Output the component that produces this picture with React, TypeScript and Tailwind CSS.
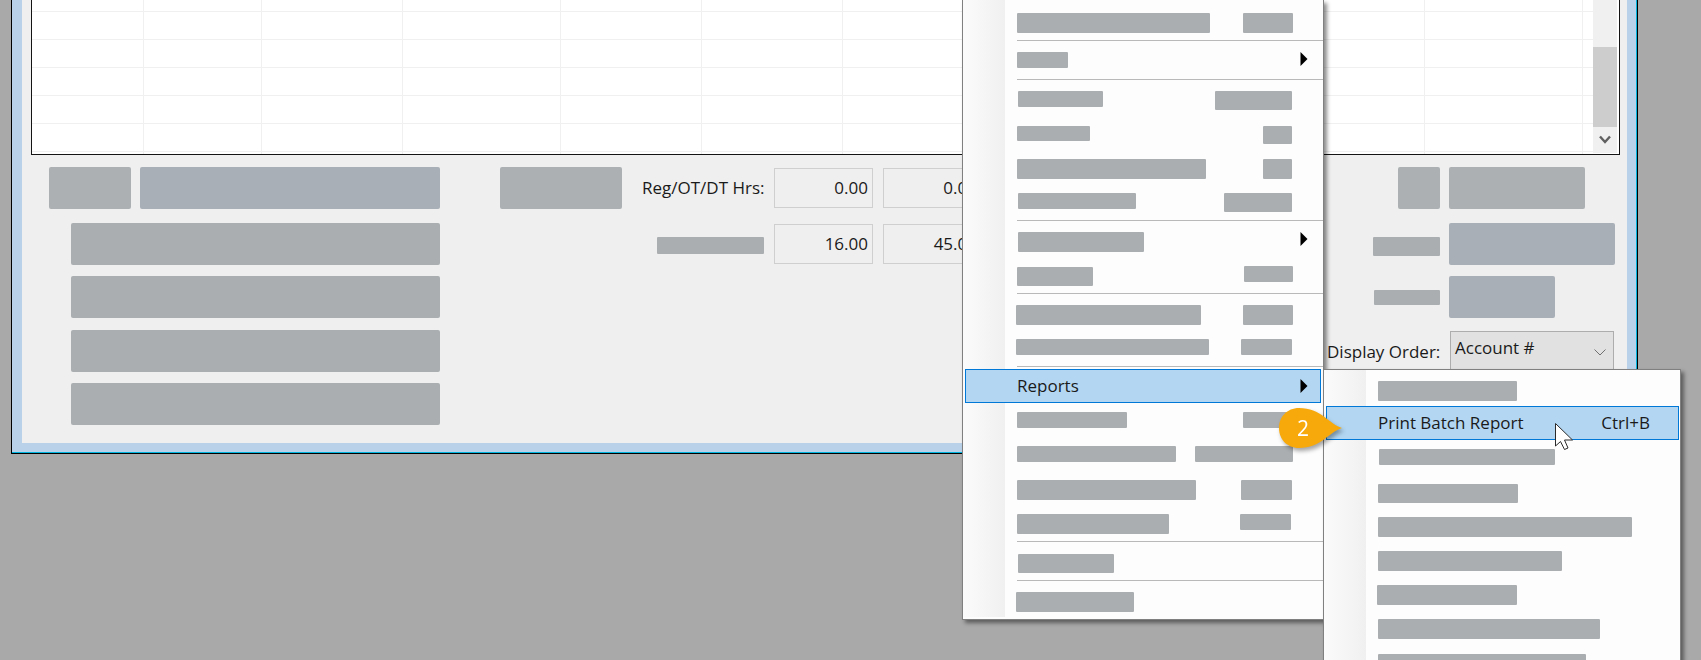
import React from "react";

function Bar({ className = "" }: { className?: string }) {
  return <div className={"shrink-0 rounded-[1px] bg-[#abaeb0] " + className} />;
}

function Block({ className = "" }: { className?: string }) {
  return <div className={"h-[42px] shrink-0 rounded-[2px] " + className} />;
}

function Sep() {
  return <div className="ml-[12px] h-px shrink-0 bg-[#b9b9b9]" />;
}

function Arrow() {
  return (
    <svg className="ml-auto mr-[15px] mt-[11px] shrink-0" width="8" height="14" viewBox="0 0 8 14">
      <path d="M0.5 0 L7.5 7 L0.5 14 Z" fill="#000" />
    </svg>
  );
}

const rowHeights = ["h-[12px]", "h-[28px]", "h-[28px]", "h-[28px]", "h-[28px]", "h-[28px]", "h-[2px]"];
const cellWidths = ["w-[112px]", "w-[118px]", "w-[141px]", "w-[158px]", "w-[141px]", "w-[141px]", "w-[582px]", "w-[158px]", "flex-1"];

function TableGrid() {
  return (
    <div className="flex min-w-0 flex-1 flex-col">
      {rowHeights.map((h, r) => (
        <div key={r} className={"flex shrink-0 " + h + (r < 6 ? " border-b border-[#f0f0f0]" : "")}>
          {cellWidths.map((w, c) => (
            <div key={c} className={"shrink-0 " + w + (c < 8 ? " border-r border-[#f0f0f0]" : "")} />
          ))}
        </div>
      ))}
    </div>
  );
}

function Scrollbar() {
  return (
    <div className="mb-[1px] flex w-[24px] shrink-0 flex-col bg-[#f0f0f0]">
      <div className="h-[47px] shrink-0" />
      <div className="h-[80px] shrink-0 bg-[#cdcdcd]" />
      <div className="flex flex-1 items-start justify-center pt-[8px]">
        <svg width="12" height="10" viewBox="0 0 12 10">
          <path d="M1 1.5 L6 7 L11 1.5" fill="none" stroke="#606060" strokeWidth="2.4" />
        </svg>
      </div>
    </div>
  );
}

function NumBox({ value }: { value: string }) {
  return (
    <div className="flex h-[40px] w-[99px] shrink-0 items-center justify-end border border-[#cfcfcf] pr-[4px] pb-[1px] text-[17px] text-[#1a1a1a]">
      {value}
    </div>
  );
}

function LowerPanel() {
  return (
    <div className="flex text-[17px] text-[#1a1a1a]">
      <div className="ml-[27px] w-[391px] shrink-0 pt-[12px]">
        <div className="flex gap-[9px]">
          <Block className="w-[82px] bg-[#adb0b2]" />
          <Block className="w-[300px] bg-[#a8afb6]" />
        </div>
        <div className="ml-[22px] flex flex-col">
          <Block className="mt-[14px] w-[369px] bg-[#abaeb0]" />
          <Block className="mt-[11px] w-[369px] bg-[#abaeb0]" />
          <Block className="mt-[12px] w-[369px] bg-[#abaeb0]" />
          <Block className="mt-[11px] w-[369px] bg-[#abaeb0]" />
        </div>
      </div>
      <div className="ml-[60px] w-[482px] shrink-0 pt-[12px]">
        <div className="flex h-[42px] items-center">
          <Block className="w-[122px] bg-[#adb0b2]" />
          <span className="ml-[20px] w-[123px] whitespace-nowrap">Reg/OT/DT Hrs:</span>
          <div className="ml-[9px] flex gap-[10px]">
            <NumBox value="0.00" />
            <NumBox value="0.00" />
          </div>
        </div>
        <div className="mt-[15px] flex h-[40px]">
          <Bar className="ml-[157px] mt-[13px] h-[17px] w-[107px]" />
          <div className="ml-[10px] flex gap-[10px]">
            <NumBox value="16.00" />
            <NumBox value="45.00" />
          </div>
        </div>
      </div>
      <div className="ml-auto mr-[12px] w-[288px] shrink-0 pt-[12px]">
        <div className="flex justify-end gap-[9px] pr-[30px]">
          <Block className="w-[42px] bg-[#adb0b2]" />
          <Block className="w-[136px] bg-[#adb0b2]" />
        </div>
        <div className="mt-[14px] flex gap-[9px] pl-[46px]">
          <Bar className="mt-[14px] h-[19px] w-[67px]" />
          <Block className="w-[166px] bg-[#a8afb6]" />
        </div>
        <div className="mt-[11px] flex gap-[9px] pl-[47px]">
          <Bar className="mt-[14px] h-[15px] w-[66px]" />
          <Block className="w-[106px] bg-[#a8afb6]" />
        </div>
        <div className="mt-[13px] flex">
          <span className="mt-[8px] w-[123px] whitespace-nowrap">Display Order:</span>
          <div className="flex h-[40px] w-[164px] shrink-0 border border-[#adadad] bg-[#e1e1e1] pl-[4px] pt-[3px]">
            <span className="whitespace-nowrap">Account #</span>
            <svg className="ml-auto mr-[7px] mt-[14px]" width="12" height="7" viewBox="0 0 12 7">
              <path d="M0.5 0.5 L6 6 L11.5 0.5" fill="none" stroke="#707070" strokeWidth="1" />
            </svg>
          </div>
        </div>
      </div>
    </div>
  );
}

function MainMenu() {
  return (
    <div className="absolute left-[962px] top-0 flex h-[620px] w-[362px] border border-t-0 border-[#808080] bg-[#fdfdfd] pb-[2px] shadow-[3px_3px_4px_rgba(0,0,0,0.45)]">
      <div className="w-[42px] shrink-0 bg-gradient-to-r from-[#fbfbfb] to-[#f0f0f0]" />
      <div className="flex min-w-0 flex-1 flex-col">
        <div className="flex h-[40px]">
          <Bar className="ml-[12px] mt-[13px] h-[20px] w-[193px]" />
          <Bar className="ml-auto mr-[30px] mt-[13px] h-[20px] w-[50px]" />
        </div>
        <Sep />
        <div className="flex h-[38px]">
          <Bar className="ml-[12px] mt-[11px] h-[16px] w-[51px]" />
          <Arrow />
        </div>
        <Sep />
        <div className="flex h-[37px]">
          <Bar className="ml-[13px] mt-[11px] h-[16px] w-[85px]" />
          <Bar className="ml-auto mr-[31px] mt-[11px] h-[19px] w-[77px]" />
        </div>
        <div className="flex h-[34px]">
          <Bar className="ml-[12px] mt-[9px] h-[15px] w-[73px]" />
          <Bar className="ml-auto mr-[31px] mt-[9px] h-[18px] w-[29px]" />
        </div>
        <div className="flex h-[34px]">
          <Bar className="ml-[12px] mt-[8px] h-[20px] w-[189px]" />
          <Bar className="ml-auto mr-[31px] mt-[8px] h-[20px] w-[29px]" />
        </div>
        <div className="flex h-[35px]">
          <Bar className="ml-[13px] mt-[8px] h-[16px] w-[118px]" />
          <Bar className="ml-auto mr-[31px] mt-[8px] h-[19px] w-[68px]" />
        </div>
        <Sep />
        <div className="flex h-[38px]">
          <Bar className="ml-[13px] mt-[11px] h-[20px] w-[126px]" />
          <Arrow />
        </div>
        <div className="flex h-[34px]">
          <Bar className="ml-[12px] mt-[8px] h-[19px] w-[76px]" />
          <Bar className="ml-auto mr-[30px] mt-[7px] h-[16px] w-[49px]" />
        </div>
        <Sep />
        <div className="flex h-[38px]">
          <Bar className="ml-[11px] mt-[11px] h-[20px] w-[185px]" />
          <Bar className="ml-auto mr-[30px] mt-[11px] h-[20px] w-[50px]" />
        </div>
        <div className="flex h-[34px]">
          <Bar className="ml-[11px] mt-[7px] h-[16px] w-[193px]" />
          <Bar className="ml-auto mr-[31px] mt-[7px] h-[16px] w-[51px]" />
        </div>
        <Sep />
        <div className="-ml-[40px] mr-[2px] mt-[2px] mb-[2px] flex h-[34px] shrink-0 items-center border border-[#0078d7] bg-[#b3d7f3] pl-[51px]">
          <span className="text-[17px] text-[#1a1a1a]">Reports</span>
          <svg className="ml-auto mr-[12px] shrink-0" width="8" height="14" viewBox="0 0 8 14">
            <path d="M0.5 0 L7.5 7 L0.5 14 Z" fill="#000" />
          </svg>
        </div>
        <div className="flex h-[34px]">
          <Bar className="ml-[12px] mt-[7px] h-[16px] w-[110px]" />
          <Bar className="ml-auto mr-[30px] mt-[7px] h-[16px] w-[50px]" />
        </div>
        <div className="flex h-[34px]">
          <Bar className="ml-[12px] mt-[7px] h-[16px] w-[159px]" />
          <Bar className="ml-auto mr-[30px] mt-[7px] h-[16px] w-[98px]" />
        </div>
        <div className="flex h-[34px]">
          <Bar className="ml-[12px] mt-[7px] h-[20px] w-[179px]" />
          <Bar className="ml-auto mr-[31px] mt-[7px] h-[20px] w-[51px]" />
        </div>
        <div className="flex h-[34px]">
          <Bar className="ml-[12px] mt-[7px] h-[20px] w-[152px]" />
          <Bar className="ml-auto mr-[32px] mt-[7px] h-[16px] w-[51px]" />
        </div>
        <Sep />
        <div className="flex h-[38px]">
          <Bar className="ml-[13px] mt-[12px] h-[19px] w-[96px]" />
        </div>
        <Sep />
        <div className="flex h-[36px]">
          <Bar className="ml-[11px] mt-[11px] h-[20px] w-[118px]" />
        </div>
      </div>
    </div>
  );
}

function SubMenu() {
  return (
    <div className="absolute left-[1323px] top-[369px] flex h-[300px] w-[358px] border border-[#808080] bg-[#fdfdfd] shadow-[3px_3px_4px_rgba(0,0,0,0.45)]">
      <div className="w-[42px] shrink-0 bg-gradient-to-r from-[#fbfbfb] to-[#f0f0f0]" />
      <div className="flex min-w-0 flex-1 flex-col">
        <div className="flex h-[35px] shrink-0">
          <Bar className="ml-[12px] mt-[11px] h-[20px] w-[139px]" />
        </div>
        <div className="-ml-[40px] mr-[1px] mt-[1px] flex h-[34px] shrink-0 items-center border border-[#0078d7] bg-[#b3d7f3] pl-[51px] pr-[28px] text-[17px] text-[#1a1a1a]">
          <span>Print Batch Report</span>
          <span className="ml-auto">Ctrl+B</span>
        </div>
        <div className="flex h-[33px] shrink-0">
          <Bar className="ml-[13px] mt-[9px] h-[16px] w-[176px]" />
        </div>
        <div className="flex h-[34px] shrink-0">
          <Bar className="ml-[12px] mt-[11px] h-[19px] w-[140px]" />
        </div>
        <div className="flex h-[34px] shrink-0">
          <Bar className="ml-[12px] mt-[10px] h-[20px] w-[254px]" />
        </div>
        <div className="flex h-[34px] shrink-0">
          <Bar className="ml-[12px] mt-[10px] h-[20px] w-[184px]" />
        </div>
        <div className="flex h-[34px] shrink-0">
          <Bar className="ml-[11px] mt-[10px] h-[20px] w-[140px]" />
        </div>
        <div className="flex h-[34px] shrink-0">
          <Bar className="ml-[12px] mt-[10px] h-[20px] w-[222px]" />
        </div>
        <div className="flex h-[34px] shrink-0">
          <Bar className="ml-[12px] mt-[11px] h-[20px] w-[208px]" />
        </div>
      </div>
    </div>
  );
}

function Badge() {
  return (
    <div className="absolute left-[1279px] top-[408px] flex h-[40px] w-[63px] drop-shadow-[2px_3px_2px_rgba(0,0,0,0.35)]">
      <svg className="absolute inset-0" width="63" height="40" viewBox="0 0 63 40">
        <path d="M63 20 C50 24 42 40 20 40 C8 40 0 31 0 20 C0 9 8 0 20 0 C42 0 50 16 63 20 Z" fill="#f7a90b" />
      </svg>
      <span className="relative ml-[18px] mt-[6px] text-[21px] leading-[28px] text-white">2</span>
    </div>
  );
}

function Cursor() {
  return (
    <svg className="absolute left-[1555px] top-[423px]" width="20" height="28" viewBox="0 0 20 28">
      <path d="M0.5 0.5 L0.5 23 L5.5 18.5 L9.5 26.5 L13 25 L9.5 17 L17.5 17 Z" fill="#fff" stroke="#2a2a2a" strokeWidth="1" />
    </svg>
  );
}

export default function App() {
  return (
    <div className="relative h-[660px] w-[1701px] overflow-hidden bg-[#a9a9a9] font-['Open_Sans',sans-serif]">
      <div className="ml-[11px] h-[454px] w-[1627px] border-x border-b border-black">
        <div className="h-[453px] border-b border-r border-[#00b4e0] bg-[#b9d2ea] pl-[10px] pr-[9px] pb-[9px]">
          <div className="h-[443px] bg-[#efefef] pl-[9px] pr-[7px]">
            <div className="flex h-[155px] border-b border-l border-r border-[#141414] bg-white pr-[2px]">
              <TableGrid />
              <Scrollbar />
            </div>
            <div className="-ml-[9px] -mr-[7px]">
              <LowerPanel />
            </div>
          </div>
        </div>
      </div>
      <MainMenu />
      <SubMenu />
      <Badge />
      <Cursor />
    </div>
  );
}
